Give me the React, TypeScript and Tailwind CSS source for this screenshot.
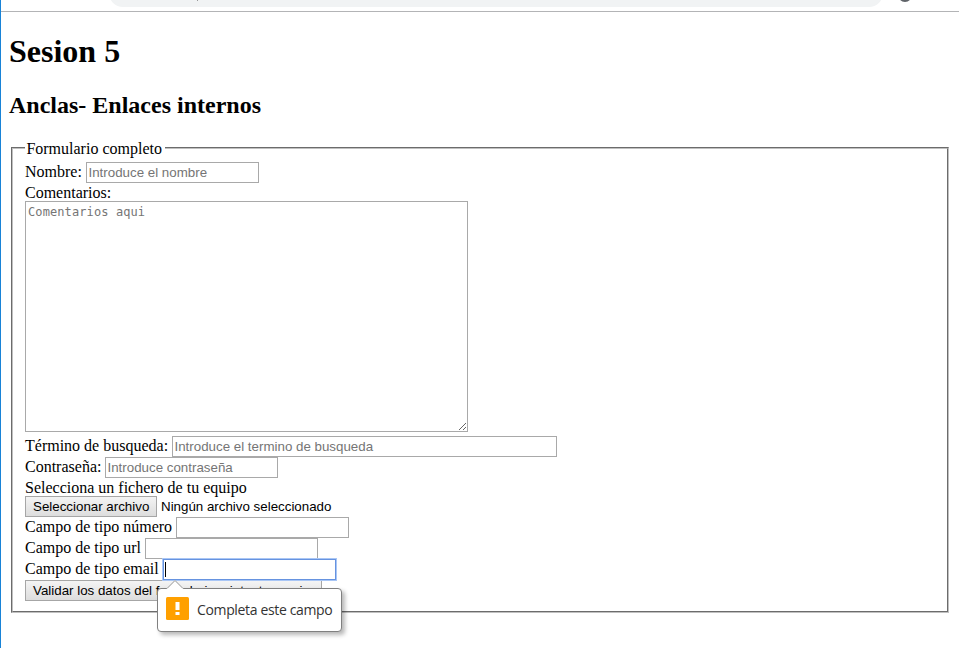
import React from "react";

const serif = "font-['Liberation_Serif',serif]";
const sans = "font-['Liberation_Sans',sans-serif]";

function Label({ text, width }: { text: string; width: string }) {
  return <label className={`${width} shrink-0 self-start whitespace-nowrap leading-[19px]`}>{text}</label>;
}

function Field({ placeholder = "", width = "w-[173px]" }: { placeholder?: string; width?: string }) {
  return (
    <input
      placeholder={placeholder}
      className={`${sans} ${width} block h-[21px] border border-[#a9a9a9] bg-white px-[1.5px] text-[13.333px] leading-[15px] placeholder:text-[#757575] outline-none`}
    />
  );
}

const button = `${sans} block h-[21px] border border-[#a6a6a6] bg-linear-to-b from-[#f4f4f4] to-[#dddddd] text-left text-[13.333px] leading-[19px] whitespace-nowrap pl-[7px]`;

export default function App() {
  return (
    <div className={`${serif} relative h-[648px] w-[959px] overflow-hidden border-l border-[#1883d7] bg-white text-[16px] leading-[18px] text-black`}>
      <div className="relative h-3 overflow-hidden border-b border-[#b3b4b6]">
        <div className="-mt-[21px] ml-[108px] h-[28px] w-[774px] rounded-[14px] bg-[#f1f3f4]" />
        <div className="absolute left-[196px] top-0 h-px w-px bg-[#999]" />
        <div className="absolute -top-[12px] left-[897px] size-[14px] rounded-full border-2 border-[#5f6368]" />
      </div>
      <h1 className="ml-2 mt-[21px] h-9 text-[32px] font-bold leading-9">Sesion 5</h1>
      <h2 className="ml-2 mt-[23px] h-[27px] text-[24px] font-bold leading-[27px]">Anclas- Enlaces internos</h2>
      <fieldset className="ml-[10px] mt-5 h-[474px] w-[938px] border-2 px-3 [border-style:groove] [border-color:#c0c0c0]">
        <legend className="h-[18px] w-[140px] whitespace-nowrap px-[1.4px] leading-[18px]">
          <span className="relative top-px">Formulario completo</span>
        </legend>
        <div className="mt-[5px] flex h-[21px] items-center">
          <Label text="Nombre:" width="w-[61px]" />
          <Field placeholder="Introduce el nombre" />
        </div>
        <div className="h-[18px] leading-5">Comentarios:</div>
        <textarea
          placeholder="Comentarios aqui"
          className="block h-[231px] w-[443px] resize border border-[#a9a9a9] bg-white px-[2px] pt-[3px] font-['DejaVu_Sans_Mono',monospace] text-[12px] leading-[15px] tracking-[0.1px] placeholder:text-[#757575]"
        />
        <div className="mt-1 flex h-[21px] items-center">
          <Label text="Término de busqueda:" width="w-[147px]" />
          <Field placeholder="Introduce el termino de busqueda" width="w-[385px]" />
        </div>
        <div className="flex h-[21px] items-center">
          <Label text="Contraseña:" width="w-[80px]" />
          <Field placeholder="Introduce contraseña" />
        </div>
        <div className="h-[18px] leading-5">Selecciona un fichero de tu equipo</div>
        <div className="flex h-[21px] items-center">
          <button className={`${button} w-[132px]`}>Seleccionar archivo</button>
          <span className={`${sans} ml-1 text-[13.333px]`}>Ningún archivo seleccionado</span>
        </div>
        <div className="flex h-[21px] items-center">
          <Label text="Campo de tipo número" width="w-[151px]" />
          <Field />
        </div>
        <div className="flex h-[21px] items-center">
          <Label text="Campo de tipo url" width="w-[120px]" />
          <Field />
        </div>
        <div className="flex h-[21px] items-center">
          <Label text="Campo de tipo email" width="w-[138px]" />
          <div className="flex h-[21px] w-[173px] items-center border border-[#6693e0] bg-white pl-px ring-1 ring-[#a9c6f5]">
            <span className="h-[15px] w-px bg-black" />
          </div>
        </div>
        <button className={`${button} w-[297px]`}>Validar los datos del formulario e intentar enviar</button>
      </fieldset>
      <div className="absolute left-[156px] top-[588px] flex h-[44px] w-[185px] items-center rounded-[4px] border border-[#808080] bg-white pl-[8px] shadow-[3px_3px_4px_rgba(0,0,0,0.28)]">
        <svg className="absolute left-[8px] -top-[9px]" width="18" height="10" viewBox="0 0 18 10">
          <path d="M0 9L9 0L18 9V10H0Z" fill="white" />
          <path d="M0 8.5H1L9 .5L17 8.5H18" fill="none" stroke="#909090" />
        </svg>
        <svg className="-mt-[3px]" width="23" height="23" viewBox="0 0 23 23">
          <rect width="23" height="23" rx="1.5" fill="#ffa000" />
          <path d="M9.5 5H13.5V13H9.5ZM9.5 15H13.5V18H9.5Z" fill="white" />
        </svg>
        <span className="ml-2 whitespace-nowrap font-['Open_Sans',sans-serif] text-[14px] tracking-[-0.35px] text-[#333]">Completa este campo</span>
      </div>
    </div>
  );
}
